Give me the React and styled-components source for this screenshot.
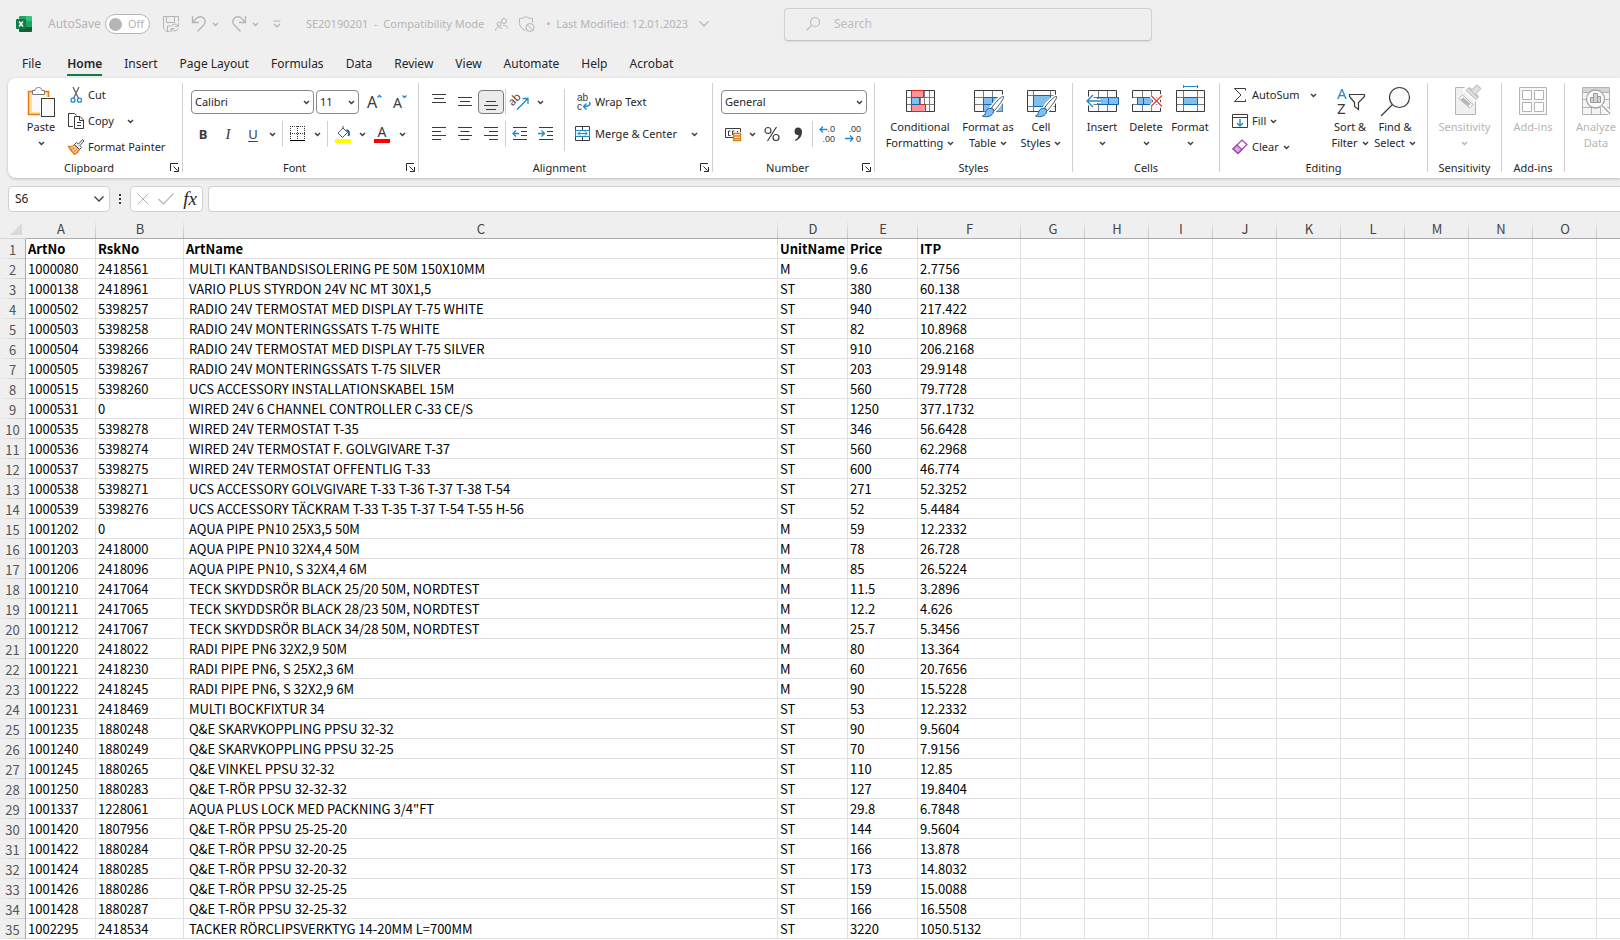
import React from "react";
import styled, { createGlobalStyle } from "styled-components";

const GlobalStyle = createGlobalStyle`
  * {
    box-sizing: border-box;
  }

  body {
    margin: 0;
    background: #efefef;
    color: #262626;
    font-family: "Noto Sans", "Open Sans", sans-serif;
    font-size: 11px;
    line-height: 16px;
  }

  button, input, select {
    margin: 0;
    padding: 0;
    border: none;
    background: none;
    color: inherit;
    font: inherit;
  }

  svg {
    display: block;
    flex-shrink: 0;
    overflow: visible;
  }
`;

const Window = styled.div`
  display: flex;
  flex-direction: column;
  height: 100vh;
  overflow: hidden;
`;

/* ---------- title bar ---------- */

const TitleBar = styled.header`
  display: flex;
  align-items: center;
  height: 48px;
  padding-left: 16px;
  color: #b5b5b5;
`;

const TitleLeft = styled.div`
  display: flex;
  align-items: center;
  flex: 0 0 768px;
`;

const AutoSave = styled.label`
  display: flex;
  align-items: center;
  gap: 4px;
  margin-left: 16px;
  font-size: 12px;
`;

const Toggle = styled.span`
  display: flex;
  align-items: center;
  gap: 6px;
  width: 45px;
  height: 20px;
  padding-left: 3px;
  border: 1px solid #b5b5b5;
  border-radius: 10px;
  background: #fff;
  font-size: 11px;

  input {
    appearance: none;
    width: 13px;
    height: 13px;
    border-radius: 50%;
    background: #b5b5b5;
  }
`;

const QuickTools = styled.div`
  display: flex;
  align-items: center;
  margin-left: 12px;
`;

const QuickButton = styled.button`
  display: flex;
  align-items: center;
  justify-content: center;
  width: ${(p) => p.$w}px;
  height: 20px;
  padding-left: ${(p) => (p.$split ? 6 : 0)}px;
`;

const DocTitle = styled.div`
  display: flex;
  align-items: center;
  gap: 11px;
  margin-left: 12px;
  white-space: pre;
`;

const SearchBox = styled.label`
  display: flex;
  align-items: center;
  gap: 14px;
  flex: 0 1 368px;
  height: 33px;
  padding-left: 21px;
  border: 1px solid #d0d0d0;
  border-bottom-color: #c4c4c4;
  border-radius: 4px;
  box-shadow: 0 1px 1px #dcdcdc;

  input {
    flex: 1;
    outline: none;
    font-size: 12px;
  }

  input::placeholder {
    color: #bdbdbd;
  }
`;

/* ---------- tabs ---------- */

const Tabs = styled.nav`
  display: flex;
  gap: 22px;
  height: 30px;
  padding: 6px 0 0 22px;
  font-size: 12px;
`;

const Tab = styled.a`
  height: 22px;
  margin-left: ${(p) => (p.$active ? 4 : 0)}px;
  line-height: 20px;
  color: #262626;
  text-decoration: none;
  font-weight: ${(p) => (p.$active ? 600 : 400)};
  border-bottom: 2px solid ${(p) => (p.$active ? "#107c41" : "transparent")};
`;

/* ---------- ribbon ---------- */

const Ribbon = styled.section`
  display: flex;
  height: 100px;
  flex-shrink: 0;
  margin-left: 8px;
  background: #fff;
  border-radius: 8px 0 0 8px;
  box-shadow: 0 1px 3px #bdbdbd;
`;

const Divider = styled.div`
  flex-shrink: 0;
  width: 1px;
  margin: ${(p) => p.$margin || "5px 0 6px"};
  background: #d1d1d1;
`;

const GroupBox = styled.div`
  display: flex;
  flex-direction: column;
  flex: 0 0 ${(p) => p.$w}px;
  padding-top: 4px;
`;

const GroupBody = styled.div`
  display: flex;
  height: 78px;
  padding-left: ${(p) => p.$pad}px;
`;

const GroupFooter = styled.div`
  display: flex;
  align-items: center;
  height: 16px;

  span {
    flex: 1;
    text-align: center;
  }
`;

const Launcher = styled.button`
  width: 12px;
  height: 12px;
`;

const Stack = styled.div`
  display: flex;
  flex-direction: column;
  width: ${(p) => (p.$w ? `${p.$w}px` : "auto")};
`;

const ToolStack = styled(Stack)`
  gap: 6px;
  padding-top: 7px;
`;

const ToolRow = styled.div`
  display: flex;
  align-items: center;
  height: 26px;

  > ${Divider} {
    align-self: stretch;
  }
`;

const RowButton = styled.button`
  display: flex;
  align-items: center;
  gap: 4px;
  height: 26px;
  white-space: nowrap;
`;

const ToolButton = styled.button`
  display: flex;
  align-items: center;
  justify-content: center;
  width: ${(p) => p.$w || 26}px;
  height: 24px;
  border: 1px solid ${(p) => (p.$on ? "#7a7a7a" : "transparent")};
  border-radius: 4px;
  background: ${(p) => (p.$on ? "#ebebeb" : "none")};
`;

const Glyph = styled.span`
  font-size: ${(p) => (p.$italic ? 15 : 13)}px;
  font-weight: ${(p) => (p.$bold ? 700 : 400)};
  font-style: ${(p) => (p.$italic ? "italic" : "normal")};
  font-family: ${(p) => (p.$italic ? '"Liberation Serif", serif' : "inherit")};
  text-decoration: ${(p) => (p.$underline ? "underline" : "none")};
  text-underline-offset: 2px;
  color: #3b3b3b;
`;

const BigButton = styled.button`
  display: flex;
  flex-direction: column;
  align-items: center;
  width: ${(p) => p.$w}px;
  padding-top: 4px;
  color: ${(p) => (p.disabled ? "#b5b5b5" : "#262626")};
  white-space: nowrap;

  > svg {
    margin-bottom: 1px;
  }
`;

const BigLine = styled.span`
  display: flex;
  align-items: center;
  gap: 4px;
  height: 16px;
`;

const SelectBox = styled.div`
  display: grid;
  width: ${(p) => p.$w}px;
  height: 24px;
  margin-right: 2px;
  border: 1px solid #8a8a8a;
  border-radius: 4px;

  select, > svg {
    grid-area: 1 / 1;
  }

  select {
    appearance: none;
    padding-left: 3px;
    outline: none;
    font-size: 11px;
  }

  > svg {
    align-self: center;
    justify-self: end;
    margin-right: 3px;
    pointer-events: none;
  }
`;

/* ---------- formula bar ---------- */

const FormulaBar = styled.div`
  display: flex;
  height: 41px;
  flex-shrink: 0;
  padding: 8px 0 0 8px;
`;

const FieldBox = styled.div`
  display: flex;
  align-items: center;
  justify-content: space-between;
  width: ${(p) => (p.$w ? `${p.$w}px` : "auto")};
  flex: ${(p) => (p.$w ? "none" : 1)};
  height: 26px;
  padding: 0 5px 0 6px;
  border: 1px solid #d0d0d0;
  border-right-width: ${(p) => (p.$w ? 1 : 0)}px;
  border-radius: ${(p) => (p.$w ? "4px" : "4px 0 0 4px")};
  background: #fff;

  input {
    flex: 1;
    min-width: 0;
    outline: none;
    font-size: 12px;
  }
`;

const Dots = styled.div`
  display: flex;
  align-items: center;
  justify-content: center;
  width: 20px;
  height: 26px;
`;

const Fx = styled.button`
  font: italic 400 19px/20px "Liberation Serif", serif;
  color: #262626;
`;

const Spacer = styled.div`
  width: 5px;
`;

/* ---------- sheet ---------- */

const Sheet = styled.main`
  flex: 1;
  min-height: 0;
  overflow: hidden;
  background: #fff;
`;

const Grid = styled.table`
  table-layout: fixed;
  width: 1661px;
  border-spacing: 0;
  font-family: "Noto Sans CJK SC", "Lato", sans-serif;
  font-size: 13px;
  line-height: 18px;
  color: #000;
`;

const ColHead = styled.th`
  height: 20px;
  padding: 1px 0 0;
  border-bottom: 1px solid #ababab;
  background: #efefef linear-gradient(#efefef, #c4c4c4) right / 1px 100% no-repeat;
  color: #444;
  font-weight: 400;
`;

const Corner = styled.th`
  height: 20px;
  padding: 0 0 0 10px;
  border-bottom: 1px solid #d4d4d4;
  background: #efefef;
`;

const RowHead = styled.th`
  height: 20px;
  padding: 1px 0 0;
  border-right: 1px solid #ababab;
  background: #efefef linear-gradient(90deg, #efefef, #c8c8c8) bottom / 100% 1px no-repeat;
  color: #555;
  font-weight: 400;
`;

const Cell = styled.td`
  height: 20px;
  padding: 1px 0 0 2px;
  border-right: 1px solid #e0e0e0;
  border-bottom: 1px solid #e0e0e0;
  font-weight: ${(p) => (p.$bold ? 700 : 400)};
  white-space: pre;
`;

/* ---------- icons ---------- */

const INK = "#3b3b3b";
const BLUE = "#1e8bcd";
const GREY = "#b3b3b3";

const Svg = ({ w = 16, h = 16, children, ...rest }) => (
  <svg width={w} height={h} viewBox={`0 0 ${w} ${h}`} fill="none" stroke={INK} aria-hidden="true" {...rest}>
    {children}
  </svg>
);

const Chevron = ({ color = INK }) => (
  <Svg w={7} h={5} stroke={color} strokeWidth="1.4">
    <path d="M1 1l2.5 2.5L6 1" />
  </Svg>
);

const WideChevron = ({ color = INK }) => (
  <Svg w={10} h={6} stroke={color} strokeWidth="1.3">
    <path d="M.5.5L5 5 9.5.5" />
  </Svg>
);

const Drop = ({ label }) => (
  <ToolButton $w={14} aria-label={label}>
    <Chevron />
  </ToolButton>
);

const ExcelLogo = () => (
  <Svg stroke="none">
    <path d="M3 1a1 1 0 0 1 1-1h6v5H3z" fill="#21a366" />
    <path d="M10 0h5a1 1 0 0 1 1 1v4h-6z" fill="#33c481" />
    <path d="M3 5h7v6H3z" fill="#107c41" />
    <path d="M10 5h6v6h-6z" fill="#21a366" />
    <path d="M3 11h13v4a1 1 0 0 1-1 1H4a1 1 0 0 1-1-1z" fill="#185c37" />
    <rect y="3" width="10" height="10" rx="1" fill="#107c41" />
    <path d="M3 5.5l4 5M7 5.5l-4 5" stroke="#fff" strokeWidth="1.5" />
  </Svg>
);

const SaveIcon = () => (
  <Svg stroke="#b5b5b5">
    <path d="M6.5 15.5h-3l-3-3V.5h15v5M3.5.5v6h8v-6M4.5 15v-5h3" />
    <path d="M8.5 10.5a3.5 3.5 0 0 1 6.500-.5M15.500 7v3.500H12M15 12.500a3.500 3.500 0 0 1-6.500.5M8 16v-3.500h3.500" />
  </Svg>
);

const UndoIcon = ({ flip }) => (
  <Svg stroke="#b5b5b5" strokeWidth="1.3">
    <g transform={flip ? "matrix(-1 0 0 1 16 0)" : undefined}>
      <path d="M1.5 0v6.5H8M1.800 6.300l3.400-3.800C7.500.2 10.800.2 12.700 2.300c2 2.200 1.700 5 0 6.700L6.500 15.500" />
    </g>
  </Svg>
);

const PeopleIcon = () => (
  <Svg w={13} h={13} stroke="#b5b5b5">
    <circle cx="9" cy="3" r="2.5" />
    <circle cx="4" cy="6" r="2" />
    <path d="M.5 12.500c.3-2.300 1.600-3.500 3.500-3.500 1.600 0 2.600.7 3.200 2M8 7.500c2.500-.8 4 .5 4.500 3" />
  </Svg>
);

const ShieldIcon = () => (
  <Svg stroke="#b5b5b5">
    <path d="M6.500 14.500C2.500 12.500.5 10 .5 6.500v-4C3 2.500 5 2 7 .5c2 1.500 4 2 6.500 2v4" />
    <circle cx="11" cy="11.5" r="4" />
    <path d="M8.200 8.700l5.600 5.600" />
  </Svg>
);

const SearchIcon = () => (
  <Svg w={14} h={14} stroke="#bdbdbd" strokeWidth="1.2">
    <circle cx="9" cy="5" r="4.5" />
    <path d="M5.800 8.200L.5 13.500" />
  </Svg>
);

const PasteIcon = () => (
  <Svg w={28} h={32}>
    <path d="M1.500 5.500h20v23h-20z" fill="#ffdf9a" stroke="#e07b18" strokeWidth="1.5" />
    <path d="M5 8h14v18H5z" fill="#fafafa" stroke="none" />
    <path d="M5.500 8.500v-4H8c0-4 7-4 7 0h2.500v4z" fill="#fff" stroke="#7a7a7a" />
    <path d="M13 11h15v18H13z" fill="#fff" stroke="none" />
    <rect x="14.5" y="12.5" width="13" height="18" fill="#fafafa" />
  </Svg>
);

const CutIcon = () => (
  <Svg>
    <path d="M5 0l5.500 11.500M11 0L5.500 11.500" stroke="#666" strokeWidth="1.3" />
    <circle cx="5" cy="13.2" r="2" stroke={BLUE} strokeWidth="1.3" />
    <circle cx="11.5" cy="13.2" r="2" stroke={BLUE} strokeWidth="1.3" />
  </Svg>
);

const CopyIcon = () => (
  <Svg>
    <path d="M5 13.500H.5V.5h6l2 2" />
    <path d="M6.500 3.500h5.500l3.500 3.500v8.500h-9zM11.500 3.500v4h4M9 9.500h4M9 12.500h4" />
  </Svg>
);

const PainterIcon = () => (
  <Svg>
    <path d="M.5 7.500c3 .5 5-.5 6-2l5 5c-1 2-2.500 4-5 5C4.500 13 2 11 .5 7.500z" fill="#fbc58a" stroke="#e07b18" strokeWidth="1.3" />
    <path d="M3 10.500l3-1.500M5.500 13l3-2.500" stroke="#e07b18" />
    <path d="M6.500 5.500l2-2 2 1.500L14.500.5l1.500 1.500L12 6.500l1.500 2-2 2z" fill="#eee" stroke="#555" />
  </Svg>
);

const GrowFont = ({ down }) => (
  <Svg w={18} h={18}>
    <text x="2" y="15" fontSize={down ? 14 : 16} fill={INK} stroke="none">A</text>
    <path d={down ? "M11.500 2.500l2 2 2-2" : "M12.500 4.500l2-2 2 2"} stroke={BLUE} strokeWidth="1.3" />
  </Svg>
);

const BordersIcon = () => (
  <Svg>
    <path d="M.5 0v13M7.500 0v13M14.500 0v13M0 .5h15M0 7.500h15" strokeDasharray="1 1" />
    <path d="M0 14.500h15" stroke="#000" />
  </Svg>
);

const FillColorIcon = () => (
  <Svg h={17}>
    <path d="M3 7l5-5 4.500 4.500-5 5zM8 2.500V0" stroke="#555" />
    <path d="M11.500 4c2.500.5 3 3 2 6" stroke="#1565b0" strokeWidth="2" />
    <path d="M0 13h16v4H0z" fill="#ff0" stroke="none" />
  </Svg>
);

const FontColorIcon = () => (
  <Svg h={17}>
    <text x="8" y="11" fontSize="14" textAnchor="middle" fill={INK} stroke="none">A</text>
    <path d="M0 13h16v4H0z" fill="#f00" stroke="none" />
  </Svg>
);

const lineSets = {
  top: "M1 1.500h14M3 5.500h10M1 9.500h14",
  middle: "M1 4.500h14M3 8.500h10M1 12.500h14",
  bottom: "M3 8.500h10M1 12.500h14M3 16.500h10",
  left: "M1 2.500h14M1 6.500h9M1 10.500h14M1 14.500h9",
  center: "M1 2.500h14M3.500 6.500h9M1 10.500h14M3.500 14.500h9",
  right: "M1 2.500h14M6 6.500h9M1 10.500h14M6 14.500h9",
};

const LinesIcon = ({ kind }) => (
  <Svg h={18}>
    <path d={lineSets[kind]} />
  </Svg>
);

const IndentIcon = ({ more }) => (
  <Svg h={18}>
    <path d="M1 2.500h14M9 6.500h6M9 10.500h6M1 14.500h14" />
    <path d={more ? "M0 8.500h6M3.500 5.500l3 3-3 3" : "M7 8.500H1M4 5.500l-3 3 3 3"} stroke={BLUE} strokeWidth="1.3" />
  </Svg>
);

const OrientationIcon = () => (
  <Svg>
    <text x="-1" y="9" fontSize="11" fill={INK} stroke="none" transform="rotate(-45 4 9)">ab</text>
    <path d="M5 15.500L15.500 5M10.500 4.500h5.500v5.500" stroke={BLUE} strokeWidth="1.3" />
  </Svg>
);

const WrapIcon = () => (
  <Svg fontFamily="Liberation Sans" fontSize="10">
    <text x="2" y="7" fill={INK} stroke="none">ab</text>
    <text x="2" y="16" fill={INK} stroke="none">c</text>
    <path d="M14.500 8c1.500 3-1 4.500-5.500 4.500M11.500 9.500l-3 3 3 3" stroke={BLUE} strokeWidth="1.4" />
  </Svg>
);

const MergeIcon = () => (
  <Svg>
    <path d="M.5.5h14v14H.5zM7.500 0v4M7.500 11v4" />
    <path d="M.5 4.500h14v6H.5z" fill="#e9f4fc" stroke={BLUE} />
    <path d="M3 7.500h9M5 5.500l-2 2 2 2M10 5.500l2 2-2 2" stroke={BLUE} />
  </Svg>
);

const CurrencyIcon = () => (
  <Svg>
    <path d="M8 11.500H.5v-9h15V6M5.500 5h-2v4.500h2M7.500 9V5h2M12.500 5v1.500" />
    <path d="M8.500 7.500h7v7h-7zM8.500 10h7M8.500 12.500h7" stroke="#e07b18" strokeWidth="1.3" fill="#fff" />
  </Svg>
);

const PercentIcon = () => (
  <Svg strokeWidth="1.2">
    <circle cx="4" cy="4.5" r="3" />
    <circle cx="12" cy="11.5" r="3" />
    <path d="M12.500 1L3.500 15" />
  </Svg>
);

const CommaIcon = () => (
  <Svg stroke="none">
    <path d="M8 1.500c2.500 0 4 1.700 4 4.500 0 4-2 7-6.500 9l-.5-1c2.500-1.500 3.500-3 3.500-5C6 9.500 4.500 7.500 4.500 5.200 4.500 3 6 1.500 8 1.500z" fill={INK} />
  </Svg>
);

const DecimalIcon = ({ less }) => (
  <Svg fontFamily="Liberation Sans" fontSize="9" textAnchor="end">
    <text x="16" y="6" fill={INK} stroke="none">{less ? ".00" : ".0"}</text>
    <text x="16" y="16" fill={INK} stroke="none">{less ? "0" : ".00"}</text>
    <path d={less ? "M0 12.500h8M5 9.500l3 3-3 3" : "M8.500 3.500H1M4 .5l-3 3 3 3"} stroke={BLUE} strokeWidth="1.3" />
  </Svg>
);

const SheetLines = ({ v = [12, 21] }) => (
  <>
    <path d="M2.500 4.500h28v21h-28z" fill="#fafafa" />
    <path d={`M3 11.500h27M3 18.500h27 ${v.map((n) => `M${n + 0.5} 5v20`).join("")}`} stroke="#7d7d7d" />
  </>
);

const Brush = () => (
  <>
    <path d="M31.500 10.500c1.500 1-5 9.500-9 14l-3-2.500c3-5 10.500-12.500 12-11.500z" fill="#fafafa" stroke="#fff" strokeWidth="4" />
    <path d="M31.500 10.500c1.500 1-5 9.500-9 14l-3-2.500c3-5 10.500-12.500 12-11.500z" fill="#fafafa" stroke="#555" />
    <path d="M19 22.500c2 .5 3 1.800 2.500 3.500-.8 3.500-5.500 6-11 4 3-.5 2.500-3 3.500-5 1-2 3-3 5-2.500z" fill="#83beec" stroke="#1064b0" />
  </>
);

const ConditionalIcon = () => (
  <Svg w={32} h={32}>
    <SheetLines v={[7, 16, 20, 25]} />
    <path d="M7.500 4.500h12v7h-12zM7.500 18.500h14v7h-14z" fill="#ff9199" stroke="#d9261c" />
    <path d="M7.500 11.500h8v7h-8z" fill="#83beec" stroke="#1064b0" />
  </Svg>
);

const FormatTableIcon = () => (
  <Svg w={32} h={32}>
    <SheetLines v={[11, 20]} />
    <path d="M11.500 11.500h19v14h-19z" fill="#83beec" stroke="none" />
    <path d="M11.500 25V11.500h19M11.500 18.500h19M20.500 12v13" stroke="#1064b0" />
    <Brush />
  </Svg>
);

const CellStylesIcon = () => (
  <Svg w={32} h={32}>
    <path d="M2.500 4.500h28v21h-28z" fill="#fafafa" />
    <path d="M3 9.500h27M3 20.500h27M8.500 5v20M25.500 5v20" stroke="#7d7d7d" />
    <path d="M8.500 9.500h17v11h-17z" fill="#83beec" stroke="#1064b0" />
    <Brush />
  </Svg>
);

const InsertIcon = () => (
  <Svg w={32} h={32}>
    <SheetLines />
    <path d="M11.500 11.500h21v7h-21zM22.500 11.500v7" fill="#83beec" stroke="#1064b0" />
    <path d="M15 15H2M7 9l-6 6 6 6" stroke="#fff" strokeWidth="4" />
    <path d="M15 15H1M7 9l-6 6 6 6" stroke={BLUE} strokeWidth="1.4" />
  </Svg>
);

const DeleteIcon = () => (
  <Svg w={32} h={32}>
    <SheetLines />
    <path d="M0 12h7v6H0z" fill="#fff" stroke="none" />
    <path d="M7.500 11.500h15v7h-15zM13.500 11.500v7" fill="#83beec" stroke="#1064b0" />
    <path d="M21 9.500l11 11M32 9.500l-11 11" stroke="#fff" strokeWidth="4" />
    <path d="M21 9.500l11 11M32 9.500l-11 11" stroke="#e8443a" strokeWidth="1.4" />
  </Svg>
);

const FormatIcon = () => (
  <Svg w={32} h={32}>
    <SheetLines v={[9, 23]} />
    <path d="M9.500 11.500h14v7h-14z" fill="#83beec" stroke="#1064b0" />
    <path d="M9 .5h15M9.500-1v3M23.500-1v3" stroke={BLUE} />
  </Svg>
);

const SumIcon = () => (
  <Svg>
    <path d="M13.500 3.500v-2h-11L9 8l-6.500 6.500h11v-2" />
  </Svg>
);

const FillIcon = () => (
  <Svg>
    <path d="M.5 1.500h15v13H.5zM.5 4.500h15" />
    <path d="M8 6v7M5 10l3 3 3-3" stroke={BLUE} strokeWidth="1.4" />
  </Svg>
);

const ClearIcon = () => (
  <Svg strokeWidth="1.2">
    <path d="M1 10l9-9 5 4.500-9 9z" fill="#fff" stroke="#a03fb0" />
    <path d="M1 10l4-4 5 4.500-4 4z" fill="#d9a5e2" stroke="#a03fb0" />
  </Svg>
);

const SortIcon = () => (
  <Svg w={32} h={32}>
    <text x="3" y="13" fontSize="15" fill={BLUE} stroke="none">A</text>
    <text x="3" y="28" fontSize="15" fill={INK} stroke="none">Z</text>
    <path d="M15.500 8.500h15v2l-6 6v7l-4-3v-4l-5-6z" fill="#fafafa" strokeWidth="1.2" />
  </Svg>
);

const FindIcon = () => (
  <Svg w={32} h={32}>
    <circle cx="20.5" cy="11.5" r="10" fill="#fafafa" strokeWidth="1.2" />
    <path d="M13.500 18.500L2 30" strokeWidth="1.2" />
  </Svg>
);

const SensitivityIcon = () => (
  <Svg w={32} h={32} stroke={GREY}>
    <path d="M6.500 1.500h20v27h-20z" fill="#f0f0f0" />
    <path d="M10 12.500l3.500-3.500 10.500 9.500-3.500 3.500z" fill="#fff" />
    <path d="M13 12.500l7.500 6.500" strokeWidth="3" />
    <path d="M16 4l3-3 3.500 2 5-4.500 4 3.500-5 5 3 3.500-3 3z" fill="#e0e0e0" stroke="#fff" strokeWidth="4" />
    <path d="M17 4.500l3-3 3 2 5-4.500 4 3.500-5 5 2.500 3.500-2.500 2.500z" fill="#e0e0e0" />
    <path d="M20 2.500l8.500 8.500" />
  </Svg>
);

const AddinsIcon = () => (
  <Svg w={32} h={32} stroke={GREY}>
    <path d="M2.500 1.500h27v27h-27z" fill="#f7f7f7" />
    <path d="M5.500 4.500h9v9h-9zM17.500 4.500h9v9h-9zM5.500 16.500h9v9h-9zM17.500 16.500h9v9h-9z" fill="#fff" />
  </Svg>
);

const AnalyzeIcon = () => (
  <Svg w={32} h={32} stroke={GREY}>
    <path d="M2.500 1.500h27v27h-27z" fill="#f4f4f4" />
    <path d="M3 2h26v4H3z" fill="#d4d4d4" stroke="none" />
    <path d="M2.500 6.500h27M2.500 13.500h27M2.500 21.500h27M11.500 21v7M20.500 21v7" />
    <circle cx="15.5" cy="13" r="9" fill="#fafafa" stroke="#a5a5a5" strokeWidth="1.3" />
    <path d="M22 19.500l8 8" stroke="#fff" strokeWidth="4" />
    <path d="M22 19.500l8 8" stroke="#a5a5a5" strokeWidth="1.5" />
    <path d="M10.500 11.500h3v5h-3zM13.500 7.500h4v9h-4zM17.500 10.500h3v6h-3z" fill="#d4d4d4" stroke="#999" />
  </Svg>
);

/* ---------- ribbon pieces ---------- */

function Group({ name, w, pad = 0, launcher, children }) {
  return (
    <>
      <GroupBox $w={w}>
        <GroupBody $pad={pad}>{children}</GroupBody>
        <GroupFooter>
          <span>{name}</span>
          {launcher && (
            <Launcher aria-label={`${name} settings`}>
              <Svg w={10} h={10} stroke="#262626">
                <path d="M.5 8V.5H8M3.500 3.500l4 4M8.500 4v4.500H4" />
              </Svg>
            </Launcher>
          )}
        </GroupFooter>
      </GroupBox>
      <Divider />
    </>
  );
}

function Big({ w, icon, lines, drop, disabled }) {
  return (
    <BigButton $w={w} disabled={disabled}>
      {icon}
      <BigLine>{lines[0]}</BigLine>
      <BigLine>
        {lines[1]}
        {drop && <Chevron color={disabled ? GREY : INK} />}
      </BigLine>
    </BigButton>
  );
}

function Dropdown({ label, value, w }) {
  return (
    <SelectBox $w={w}>
      <select aria-label={label} defaultValue={value}>
        <option>{value}</option>
      </select>
      <Chevron />
    </SelectBox>
  );
}

const tabs = ["File", "Home", "Insert", "Page Layout", "Formulas", "Data", "Review", "View", "Automate", "Help", "Acrobat"];

const columns = [
  ["A", 70], ["B", 88], ["C", 594], ["D", 70], ["E", 70], ["F", 103],
  ["G", 64], ["H", 64], ["I", 64], ["J", 64], ["K", 64], ["L", 64], ["M", 64], ["N", 64], ["O", 64], ["", 64],
];

const rows = [
  ["ArtNo", "RskNo", "ArtName", "UnitName", "Price", "ITP"],
  ["1000080", "2418561", " MULTI KANTBANDSISOLERING PE 50M 150X10MM", "M", "9.6", "2.7756"],
  ["1000138", "2418961", " VARIO PLUS STYRDON 24V NC MT 30X1,5", "ST", "380", "60.138"],
  ["1000502", "5398257", " RADIO 24V TERMOSTAT MED DISPLAY T-75 WHITE", "ST", "940", "217.422"],
  ["1000503", "5398258", " RADIO 24V MONTERINGSSATS T-75 WHITE", "ST", "82", "10.8968"],
  ["1000504", "5398266", " RADIO 24V TERMOSTAT MED DISPLAY T-75 SILVER", "ST", "910", "206.2168"],
  ["1000505", "5398267", " RADIO 24V MONTERINGSSATS T-75 SILVER", "ST", "203", "29.9148"],
  ["1000515", "5398260", " UCS ACCESSORY INSTALLATIONSKABEL 15M", "ST", "560", "79.7728"],
  ["1000531", "0", " WIRED 24V 6 CHANNEL CONTROLLER C-33 CE/S", "ST", "1250", "377.1732"],
  ["1000535", "5398278", " WIRED 24V TERMOSTAT T-35", "ST", "346", "56.6428"],
  ["1000536", "5398274", " WIRED 24V TERMOSTAT F. GOLVGIVARE T-37", "ST", "560", "62.2968"],
  ["1000537", "5398275", " WIRED 24V TERMOSTAT OFFENTLIG T-33", "ST", "600", "46.774"],
  ["1000538", "5398271", " UCS ACCESSORY GOLVGIVARE T-33 T-36 T-37 T-38 T-54", "ST", "271", "52.3252"],
  ["1000539", "5398276", " UCS ACCESSORY TÄCKRAM T-33 T-35 T-37 T-54 T-55 H-56", "ST", "52", "5.4484"],
  ["1001202", "0", " AQUA PIPE PN10 25X3,5 50M", "M", "59", "12.2332"],
  ["1001203", "2418000", " AQUA PIPE PN10 32X4,4 50M", "M", "78", "26.728"],
  ["1001206", "2418096", " AQUA PIPE PN10, S 32X4,4 6M", "M", "85", "26.5224"],
  ["1001210", "2417064", " TECK SKYDDSRÖR BLACK 25/20 50M, NORDTEST", "M", "11.5", "3.2896"],
  ["1001211", "2417065", " TECK SKYDDSRÖR BLACK 28/23 50M, NORDTEST", "M", "12.2", "4.626"],
  ["1001212", "2417067", " TECK SKYDDSRÖR BLACK 34/28 50M, NORDTEST", "M", "25.7", "5.3456"],
  ["1001220", "2418022", " RADI PIPE PN6 32X2,9 50M", "M", "80", "13.364"],
  ["1001221", "2418230", " RADI PIPE PN6, S 25X2,3 6M", "M", "60", "20.7656"],
  ["1001222", "2418245", " RADI PIPE PN6, S 32X2,9 6M", "M", "90", "15.5228"],
  ["1001231", "2418469", " MULTI BOCKFIXTUR 34", "ST", "53", "12.2332"],
  ["1001235", "1880248", " Q&E SKARVKOPPLING PPSU 32-32", "ST", "90", "9.5604"],
  ["1001240", "1880249", " Q&E SKARVKOPPLING PPSU 32-25", "ST", "70", "7.9156"],
  ["1001245", "1880265", " Q&E VINKEL PPSU 32-32", "ST", "110", "12.85"],
  ["1001250", "1880283", " Q&E T-RÖR PPSU 32-32-32", "ST", "127", "19.8404"],
  ["1001337", "1228061", " AQUA PLUS LOCK MED PACKNING 3/4\"FT", "ST", "29.8", "6.7848"],
  ["1001420", "1807956", " Q&E T-RÖR PPSU 25-25-20", "ST", "144", "9.5604"],
  ["1001422", "1880284", " Q&E T-RÖR PPSU 32-20-25", "ST", "166", "13.878"],
  ["1001424", "1880285", " Q&E T-RÖR PPSU 32-20-32", "ST", "173", "14.8032"],
  ["1001426", "1880286", " Q&E T-RÖR PPSU 32-25-25", "ST", "159", "15.0088"],
  ["1001428", "1880287", " Q&E T-RÖR PPSU 32-25-32", "ST", "166", "16.5508"],
  ["1002295", "2418534", " TACKER RÖRCLIPSVERKTYG 14-20MM L=700MM", "ST", "3220", "1050.5132"],
];

function Header() {
  return (
    <TitleBar>
      <TitleLeft>
        <ExcelLogo />
        <AutoSave>
          AutoSave
          <Toggle>
            <input type="checkbox" />
            Off
          </Toggle>
        </AutoSave>
        <QuickTools>
          <QuickButton $w={18} aria-label="Save"><SaveIcon /></QuickButton>
          <QuickButton $w={32} $split aria-label="Undo"><UndoIcon /></QuickButton>
          <QuickButton $w={8} aria-label="Undo list"><Chevron color="#b5b5b5" /></QuickButton>
          <QuickButton $w={32} $split aria-label="Redo"><UndoIcon flip /></QuickButton>
          <QuickButton $w={8} aria-label="Redo list"><Chevron color="#b5b5b5" /></QuickButton>
          <QuickButton $w={34} aria-label="Customize toolbar">
            <Svg w={8} h={8} stroke="#b5b5b5" strokeWidth="1.2">
              <path d="M.5 1h7M1 4l3 3 3-3" />
            </Svg>
          </QuickButton>
        </QuickTools>
        <DocTitle>
          <span>SE20190201  -  Compatibility Mode</span>
          <PeopleIcon />
          <ShieldIcon />
          <span>•  Last Modified: 12.01.2023</span>
          <WideChevron color="#b5b5b5" />
        </DocTitle>
      </TitleLeft>
      <SearchBox>
        <SearchIcon />
        <input type="search" placeholder="Search" aria-label="Search" />
      </SearchBox>
    </TitleBar>
  );
}

function HomeRibbon() {
  return (
    <Ribbon>
      <Group name="Clipboard" w={174} pad={6} launcher>
        <Big w={54} icon={<PasteIcon />} lines={["Paste", ""]} drop />
        <Stack>
          <RowButton><CutIcon />Cut</RowButton>
          <ToolRow>
            <RowButton><CopyIcon />Copy</RowButton>
            <ToolButton $w={34} aria-label="Copy options"><Chevron /></ToolButton>
          </ToolRow>
          <RowButton><PainterIcon />Format Painter</RowButton>
        </Stack>
      </Group>

      <Group name="Font" w={235} pad={8} launcher>
        <ToolStack>
          <ToolRow>
            <Dropdown label="Font" value="Calibri" w={123} />
            <Dropdown label="Font size" value="11" w={43} />
            <ToolButton aria-label="Increase font size"><GrowFont /></ToolButton>
            <ToolButton aria-label="Decrease font size"><GrowFont down /></ToolButton>
          </ToolRow>
          <ToolRow>
            <ToolButton $w={24}><Glyph $bold>B</Glyph></ToolButton>
            <ToolButton><Glyph $italic>I</Glyph></ToolButton>
            <ToolButton $w={24}><Glyph $underline>U</Glyph></ToolButton>
            <Drop label="Underline style" />
            <Divider $margin="0 3px" />
            <ToolButton $w={24} aria-label="Borders"><BordersIcon /></ToolButton>
            <Drop label="Border style" />
            <Divider $margin="0 3px" />
            <ToolButton $w={24} aria-label="Fill color"><FillColorIcon /></ToolButton>
            <Drop label="Fill colors" />
            <ToolButton aria-label="Font color"><FontColorIcon /></ToolButton>
            <Drop label="Font colors" />
          </ToolRow>
        </ToolStack>
      </Group>

      <Group name="Alignment" w={293} pad={7} launcher>
        <ToolStack $w={138}>
          <ToolRow>
            <ToolButton aria-label="Top align"><LinesIcon kind="top" /></ToolButton>
            <ToolButton aria-label="Middle align"><LinesIcon kind="middle" /></ToolButton>
            <ToolButton $on aria-label="Bottom align"><LinesIcon kind="bottom" /></ToolButton>
            <Divider $margin="0 1px" />
            <ToolButton aria-label="Orientation"><OrientationIcon /></ToolButton>
            <Drop label="Orientation options" />
          </ToolRow>
          <ToolRow>
            <ToolButton aria-label="Align left"><LinesIcon kind="left" /></ToolButton>
            <ToolButton aria-label="Center"><LinesIcon kind="center" /></ToolButton>
            <ToolButton aria-label="Align right"><LinesIcon kind="right" /></ToolButton>
            <Divider $margin="0 1px" />
            <ToolButton aria-label="Decrease indent"><IndentIcon /></ToolButton>
            <ToolButton aria-label="Increase indent"><IndentIcon more /></ToolButton>
          </ToolRow>
        </ToolStack>
        <Divider $margin="7px 10px 9px 0" />
        <ToolStack>
          <RowButton><WrapIcon />Wrap Text</RowButton>
          <ToolRow>
            <RowButton><MergeIcon />Merge &amp; Center</RowButton>
            <ToolButton $w={34} aria-label="Merge options"><Chevron /></ToolButton>
          </ToolRow>
        </ToolStack>
      </Group>

      <Group name="Number" w={161} pad={8} launcher>
        <ToolStack>
          <ToolRow>
            <Dropdown label="Number format" value="General" w={146} />
          </ToolRow>
          <ToolRow>
            <ToolButton $w={24} aria-label="Accounting format"><CurrencyIcon /></ToolButton>
            <Drop label="Currencies" />
            <ToolButton aria-label="Percent style"><PercentIcon /></ToolButton>
            <ToolButton aria-label="Comma style"><CommaIcon /></ToolButton>
            <Divider $margin="0 1px" />
            <ToolButton aria-label="Increase decimal"><DecimalIcon /></ToolButton>
            <ToolButton aria-label="Decrease decimal"><DecimalIcon less /></ToolButton>
          </ToolRow>
        </ToolStack>
      </Group>

      <Group name="Styles" w={197} pad={5}>
        <Big w={80} icon={<ConditionalIcon />} lines={["Conditional", "Formatting"]} drop />
        <Big w={56} icon={<FormatTableIcon />} lines={["Format as", "Table"]} drop />
        <Big w={50} icon={<CellStylesIcon />} lines={["Cell", "Styles"]} drop />
      </Group>

      <Group name="Cells" w={146} pad={7}>
        <Big w={44} icon={<InsertIcon />} lines={["Insert", ""]} drop />
        <Big w={44} icon={<DeleteIcon />} lines={["Delete", ""]} drop />
        <Big w={44} icon={<FormatIcon />} lines={["Format", ""]} drop />
      </Group>

      <Group name="Editing" w={207} pad={12}>
        <Stack $w={96}>
          <ToolRow>
            <RowButton><SumIcon />AutoSum</RowButton>
            <ToolButton $w={34} aria-label="AutoSum options"><Chevron /></ToolButton>
          </ToolRow>
          <RowButton><FillIcon />Fill <Chevron /></RowButton>
          <RowButton><ClearIcon />Clear <Chevron /></RowButton>
        </Stack>
        <Big w={44} icon={<SortIcon />} lines={["Sort &", "Filter"]} drop />
        <Big w={46} icon={<FindIcon />} lines={["Find &", "Select"]} drop />
      </Group>

      <Group name="Sensitivity" w={73} pad={5}>
        <Big w={63} icon={<SensitivityIcon />} lines={["Sensitivity", ""]} drop disabled />
      </Group>

      <Group name="Add-ins" w={62} pad={5}>
        <Big w={52} icon={<AddinsIcon />} lines={["Add-ins", ""]} disabled />
      </Group>

      <GroupBox $w={56}>
        <GroupBody $pad={6}>
          <Big w={50} icon={<AnalyzeIcon />} lines={["Analyze", "Data"]} disabled />
        </GroupBody>
      </GroupBox>
    </Ribbon>
  );
}

function Formula() {
  return (
    <FormulaBar>
      <FieldBox $w={102}>
        <input aria-label="Name box" defaultValue="S6" />
        <WideChevron />
      </FieldBox>
      <Dots>
        <Svg w={2} h={10} stroke={INK} strokeWidth="2">
          <path d="M1 0v2M1 4v2M1 8v2" />
        </Svg>
      </Dots>
      <FieldBox $w={73}>
        <button aria-label="Cancel">
          <Svg w={12} h={12} stroke="#b5b5b5"><path d="M.5.5l11 11M11.500.5l-11 11" /></Svg>
        </button>
        <button aria-label="Enter">
          <Svg h={12} stroke="#b5b5b5" strokeWidth="1.2"><path d="M.5 6l5 5L15.500.5" /></Svg>
        </button>
        <Fx>fx</Fx>
      </FieldBox>
      <Spacer />
      <FieldBox>
        <input aria-label="Formula" defaultValue="" />
      </FieldBox>
    </FormulaBar>
  );
}

export default function App() {
  return (
    <Window>
      <GlobalStyle />
      <Header />
      <Tabs>
        {tabs.map((name) => (
          <Tab key={name} href="#" $active={name === "Home"}>{name}</Tab>
        ))}
      </Tabs>
      <HomeRibbon />
      <Formula />
      <Sheet>
        <Grid>
          <colgroup>
            <col width="26" />
            {columns.map(([, width], i) => <col key={i} width={width} />)}
          </colgroup>
          <thead>
            <tr>
              <Corner>
                <Svg w={12} h={12} stroke="none"><path d="M12 0v12H0z" fill="#dadada" /></Svg>
              </Corner>
              {columns.map(([name], i) => <ColHead key={i} scope="col">{name}</ColHead>)}
            </tr>
          </thead>
          <tbody>
            {rows.map((row, r) => (
              <tr key={row[0]}>
                <RowHead scope="row">{r + 1}</RowHead>
                {columns.map((_, c) => <Cell key={c} $bold={r === 0}>{row[c]}</Cell>)}
              </tr>
            ))}
          </tbody>
        </Grid>
      </Sheet>
    </Window>
  );
}
